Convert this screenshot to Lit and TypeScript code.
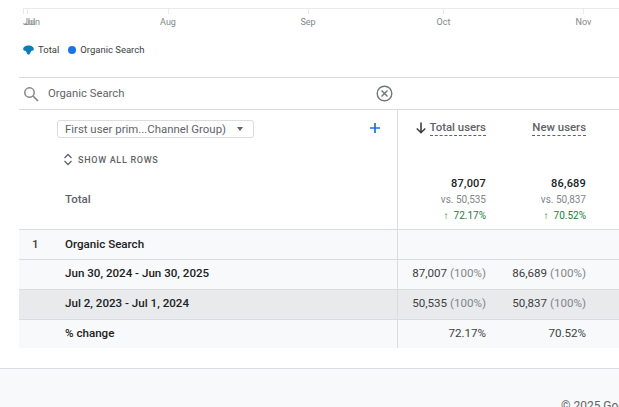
import { LitElement, html, css } from "lit";
import { customElement } from "lit/decorators.js";

const ticks: [string, number][] = [["Aug", 141], ["Sep", 139], ["Oct", 132], ["Nov", 148]];

@customElement("app-root")
export class AppRoot extends LitElement {
  static styles = css`
    :host { display: block; width: 619px; height: 407px; overflow: hidden; background: #fff;
      font-family: Roboto, "Liberation Sans", sans-serif; color: #3c4043; position: relative; }
    * { box-sizing: border-box; }
    .chart { height: 77px; margin-left: 23px; padding-top: 8px; }
    .axis { display: flex; border-top: 1px solid #e8eaed; height: 30px; width: 600px; font-size: 9px; color: #80868b; overflow: hidden; }
    .first { width: 74.5px; position: relative; flex: none; }
    .stack { position: absolute; left: 0; top: 0; height: 5px; width: 1px; background: #e8eaed; }
    .stack.b { left: 4px; }
    .lbl { position: absolute; left: 2px; top: 7px; line-height: 12px; }
    .lbl.b { left: 0; }
    .tick { display: flex; flex-direction: column; align-items: center; flex: none; }
    .mark { width: 1px; height: 5px; background: #e8eaed; }
    .tick span { margin-top: 2px; line-height: 12px; }
    .legend { display: flex; align-items: center; margin-top: 6px; font-size: 9.5px; color: #3c4043; line-height: 12px; }
    .legend svg { display: block; }
    .legend .t1 { margin: 0 9px 0 4px; }
    .legend .t2 { margin-left: 4px; }
    .dot { width: 8px; height: 8px; border-radius: 50%; background: #1a73e8; }
    .wrap { margin-left: 19px; }
    .search { height: 33px; border-top: 1px solid #dadce0; border-bottom: 1px solid #dadce0; display: flex; align-items: center; padding-left: 4px; font-size: 11.3px; color: #5f6368; }
    .search .q { margin-left: 9px; width: 328px; padding-bottom: 1px; }
    .search svg { display: block; }
    .table { display: grid; grid-template-columns: 379px 1fr; }
    .left { border-right: 1px solid #dadce0; }
    .head { height: 120px; border-bottom: 1px solid #dadce0; }
    .lhead { padding-left: 38px; position: relative; }
    .topline { display: flex; align-items: center; justify-content: space-between; padding-top: 10px; padding-right: 17px; }
    .topline svg { display: block; margin-bottom: 2px; }
    .select { width: 197px; height: 18px; border: 1px solid #dadce0; border-radius: 3px; display: flex; align-items: center; font-size: 11.4px; color: #5f6368; padding-left: 7px; white-space: nowrap; }
    .caret { width: 0; height: 0; border: 3.5px solid transparent; border-top: 4px solid #5f6368; border-bottom: 0; margin-left: 11px; }
    .showall { display: flex; align-items: center; gap: 5px; margin-top: 15px; font-size: 9px; font-weight: 500; letter-spacing: 0.7px; color: #5f6368; line-height: 12px; margin-left: 6px; }
    .totallbl { margin: 26px 0 0 8px; font-size: 11.5px; font-weight: 500; color: #5f6368; line-height: 14px; }
    .row { height: 30px; border-bottom: 1px solid #dadce0; background: #f8f9fa; display: flex; align-items: center; padding-bottom: 3px; font-size: 11.6px; font-weight: 500; color: #202124; }
    .row.first-row { padding-bottom: 2px; }
    .row.dark { background: #e9eaec; }
    .row.last { height: 28px; border-bottom: 0; padding-bottom: 2px; }
    .row .n { width: 46px; padding-left: 13px; flex: none; color: #3c4043; }
    .row .idx { width: 46px; flex: none; }
    .rhead { display: grid; grid-template-columns: 88px 100px 1fr; overflow: hidden; }
    .col { text-align: right; }
    .h { padding-top: 11px; font-size: 11.4px; font-weight: 500; color: #5f6368; display: flex; justify-content: flex-end; align-items: flex-start; gap: 3px; white-space: nowrap; line-height: 13px; }
    .h svg { display: block; margin-top: 1px; }
    .h b { font-weight: 500; border-bottom: 1px dashed #5f6368; height: 15px; }
    .v1 { margin-top: 41px; font-size: 11px; font-weight: 500; color: #202124; line-height: 14px; letter-spacing: 0.2px; }
    .v2 { margin-top: 2px; font-size: 10px; color: #80868b; line-height: 13px; }
    .v3 { margin-top: 3px; font-size: 10px; color: #188038; line-height: 13px; }
    .arrow { font-size: 10px; font-weight: 700; margin-right: 5px; }
    .cells { display: grid; grid-template-columns: 88px 100px 1fr; width: 100%; font-weight: 400; color: #3c4043; font-size: 11.6px; }
    .cells div { text-align: right; white-space: nowrap; }
    .pct { color: #80868b; }
    .footer { margin-top: 20px; height: 39px; border-top: 1px solid #dadce0; background: #f8f9fa; padding: 30px 0 0 561px; font-size: 12px; color: #5f6368; white-space: nowrap; overflow: hidden; line-height: 14px; }
  `;

  render() {
    return html`
      <div class="chart">
        <div class="axis">
          <div class="first">
            <div class="stack"></div><div class="stack b"></div>
            <span class="lbl">Jun</span><span class="lbl b">Jul</span>
          </div>
          ${ticks.map(([t, w]) => html`<div class="tick" style="width:${w}px"><div class="mark"></div><span>${t}</span></div>`)}
        </div>
        <div class="legend">
          <svg width="11" height="10" viewBox="0 0 11 10"><path fill="#0b7db8" d="M.2 4.200C.2 2 2.700.6 5.500.6s5.300 1.400 5.300 3.600c0 1-1.200 1.500-2.500 1.700L6.400 9.400H4.600L2.700 5.900C1.400 5.700.2 5.200.2 4.200z"/></svg>
          <span class="t1">Total</span>
          <div class="dot"></div>
          <span class="t2">Organic Search</span>
        </div>
      </div>
      <div class="wrap">
        <div class="search">
          <svg width="16" height="16" viewBox="0 0 16 16" fill="none" stroke="#80868b" stroke-width="1.5"><circle cx="6.500" cy="6.500" r="4.700"/><path d="M10 10l5 5" stroke-width="1.700"/></svg>
          <span class="q">Organic Search</span>
          <svg width="17" height="17" viewBox="0 0 17 17" fill="none" stroke="#70757a" stroke-width="1.400"><circle cx="8.500" cy="8.500" r="7.300"/><path d="M5.500 5.500l6 6M11.500 5.500l-6 6"/></svg>
        </div>
        <div class="table">
          <div class="left">
            <div class="head lhead">
              <div class="topline">
                <div class="select">First user prim...Channel Group)<i class="caret"></i></div>
                <svg width="10" height="10" viewBox="0 0 10 10"><path d="M5 0v10M0 5h10" stroke="#1a73e8" stroke-width="1.700"/></svg>
              </div>
              <div class="showall">
                <svg width="10" height="13" viewBox="0 0 10 13" fill="none" stroke="#5f6368" stroke-width="1.300"><path d="M1.500 5L5 1.500 8.500 5M1.500 8L5 11.500 8.500 8"/></svg>
                SHOW ALL ROWS
              </div>
              <div class="totallbl">Total</div>
            </div>
            <div class="row first-row"><span class="n">1</span>Organic Search</div>
            <div class="row"><span class="idx"></span>Jun 30, 2024 - Jun 30, 2025</div>
            <div class="row dark"><span class="idx"></span>Jul 2, 2023 - Jul 1, 2024</div>
            <div class="row last"><span class="idx"></span>% change</div>
          </div>
          <div class="right">
            <div class="head rhead">
              <div class="col">
                <div class="h">
                  <svg width="12" height="12" viewBox="0 0 12 12" fill="none" stroke="#3c4043" stroke-width="1.600"><path d="M6 .5v10M1.800 6.500L6 10.700l4.200-4.200"/></svg>
                  <b>Total users</b>
                </div>
                <div class="v1">87,007</div>
                <div class="v2">vs. 50,535</div>
                <div class="v3"><span class="arrow">↑</span>72.17%</div>
              </div>
              <div class="col">
                <div class="h"><b>New users</b></div>
                <div class="v1">86,689</div>
                <div class="v2">vs. 50,837</div>
                <div class="v3"><span class="arrow">↑</span>70.52%</div>
              </div>
              <div></div>
            </div>
            <div class="row first-row"></div>
            <div class="row"><div class="cells"><div>87,007 <span class="pct">(100%)</span></div><div>86,689 <span class="pct">(100%)</span></div></div></div>
            <div class="row dark"><div class="cells"><div>50,535 <span class="pct">(100%)</span></div><div>50,837 <span class="pct">(100%)</span></div></div></div>
            <div class="row last"><div class="cells"><div>72.17%</div><div>70.52%</div></div></div>
          </div>
        </div>
      </div>
      <div class="footer">© 2025 Google</div>
    `;
  }
}
